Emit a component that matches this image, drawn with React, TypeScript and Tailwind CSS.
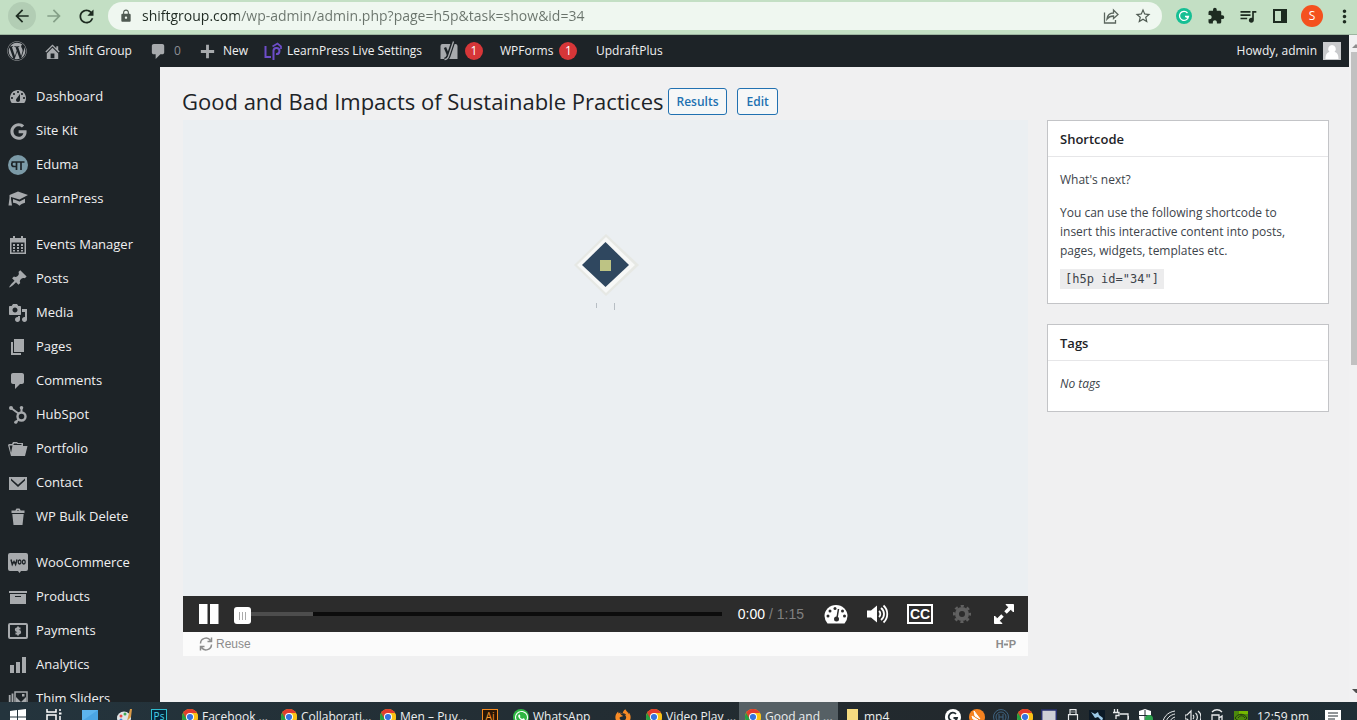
import type { ReactNode } from "react";
import { FaWordpress, FaWhatsapp, FaFirefoxBrowser } from "react-icons/fa6";
import { FaGoogle } from "react-icons/fa";
import { MdArrowBack, MdArrowForward, MdRefresh, MdLock, MdStarBorder, MdExtension, MdQueueMusic, MdMoreVert } from "react-icons/md";

const dash = {
  home: "M16 8.5l1.53 1.53-1.06 1.06L10 4.6l-6.47 6.49-1.06-1.06L10 2.5l4 4v-2h2v4zm-6-2.46l6 5.99V18H4v-5.97zM12 17v-5H8v5h4z",
  comment: "M5 2h9c1.1 0 2 .9 2 2v7c0 1.1-.9 2-2 2h-2l-5 5v-5H5c-1.1 0-2-.9-2-2V4c0-1.1.9-2 2-2z",
  plus: "M17 8.5v3h-5.5V17h-3v-5.500H3v-3h5.500V3h3v5.500z",
  dashboard: "M3.760 16h12.480c1.100-1.370 1.760-3.110 1.760-5 0-4.420-3.580-8-8-8s-8 3.580-8 8c0 1.890.660 3.630 1.760 5zM10 4c.550 0 1 .450 1 1s-.450 1-1 1-1-.450-1-1 .450-1 1-1zM6 6c.550 0 1 .450 1 1s-.450 1-1 1-1-.450-1-1 .450-1 1-1zm8 0c.550 0 1 .450 1 1s-.450 1-1 1-1-.450-1-1 .450-1 1-1zm-5.370 5.550L12 7v6c0 1.100-.900 2-2 2s-2-.900-2-2c0-.570.240-1.080.630-1.450zM4 10c.550 0 1 .450 1 1s-.450 1-1 1-1-.450-1-1 .450-1 1-1zm12 0c.550 0 1 .450 1 1s-.450 1-1 1-1-.450-1-1 .450-1 1-1z",
  calendar: "M5 1h2v2h6V1h2v2h3v16H2V3h3zM3.500 7.500v10h13v-10zM5 9h2v2H5zm4 0h2v2H9zm4 0h2v2h-2zM5 12h2v2H5zm4 0h2v2H9zm4 0h2v2h-2zM5 15h2v1.500H5zm4 0h2v1.500H9zm4 0h2v1.500h-2z",
  pin: "M10.440 3.020l1.820-1.820 6.360 6.350-1.830 1.820c-1.050-.680-2.480-.570-3.410.360l-.750.750c-.920.930-1.040 2.350-.350 3.410l-1.830 1.820-2.410-2.410-2.800 2.790c-.420.420-3.380 2.710-3.800 2.290s1.860-3.390 2.280-3.810l2.790-2.790L4.100 9.360l1.830-1.820c1.050.690 2.480.570 3.400-.360l.750-.750c.930-.920 1.050-2.350.360-3.410z",
  media: "M13 11V4c0-.550-.450-1-1-1h-1.670L9 1H5L3.670 3H2c-.550 0-1 .450-1 1v7c0 .550.450 1 1 1h10c.550 0 1-.450 1-1zM7 4.500c1.380 0 2.500 1.120 2.500 2.500S8.380 9.500 7 9.500 4.500 8.380 4.500 7 5.620 4.500 7 4.500zM14 6h5v10.500c0 1.380-1.120 2.500-2.500 2.500S14 17.880 14 16.500s1.120-2.500 2.500-2.500c.170 0 .340.020.500.050V9h-3V6zm-4 8.050V13h2v3.500c0 1.380-1.120 2.500-2.500 2.500S7 17.880 7 16.500 8.120 14 9.500 14c.170 0 .340.020.500.050z",
  page: "M6 15V2h10v13H6zm-1 1h8v2H3V5h2v11z",
  folder: "M0 6l1-1h3l1-2h4l1 1h5v3h4.500L17 17H3zM1.500 6.500L3 14l1.500-7.500zM5.500 5v1h8V5zM6 4v.500h3V4z",
  mail: "M1 4h18v13H1zM3 5.500v2l7 6.500 7-6.500v-2l-7 6.200z",
  trash: "M7.500 3.500V3l1-1.500h3L12.500 3v.500h4V6h-13V3.500zm1.500 0h2V3H9zM4.300 7h11.400l-1.200 11H5.500z",
  archive: "M19 4v2H1V4h18zM2 7h16v10H2V7zm11 3V9H7v1h6z",
  chart: "M18 18V2h-4v16h4zm-6 0V7H8v11h4zm-6 0v-8H2v8h4z",
  cap: "M10 2.500L20 6l-8.500 4.500L3 8v2l1 6.500H0.500L1.500 9V6zM5 10l6.500 2.500L17 9.800v4c-2 .5-3.500 1-5.500 3-2-2-4-2.800-6.500-3z",
};

function Dashicon({ d, size = 20 }: { d: string; size?: number }) {
  return (
    <svg viewBox="0 0 20 20" width={size} height={size} fill="currentColor" fillRule="evenodd" aria-hidden="true">
      <path d={d} />
    </svg>
  );
}

function EdumaIcon() {
  return (
    <svg viewBox="0 0 20 20" width="20" height="20" aria-hidden="true">
      <circle cx="10" cy="10" r="10" fill="#7b9aa7" />
      <path d="M3.500 7h13M8.500 7v8M13 7v8M8.500 11.500H6a2.200 2.200 0 0 1 0-4.500" fill="none" stroke="#1d2327" strokeWidth="1.700" />
    </svg>
  );
}

function HubSpotIcon() {
  return (
    <svg viewBox="0 0 20 20" width="20" height="20" fill="none" stroke="currentColor" aria-hidden="true">
      <circle cx="13.500" cy="11.500" r="4" strokeWidth="2.400" />
      <path d="M3 3l7.500 5.500M13.500 3v4.500M10.500 14.500L8 17" strokeWidth="2" />
      <g fill="currentColor" stroke="none">
        <circle cx="3" cy="3" r="2" />
        <circle cx="13.500" cy="2.800" r="1.800" />
        <circle cx="7.800" cy="17.200" r="1.600" />
      </g>
    </svg>
  );
}

function WooIcon() {
  return (
    <svg viewBox="0 0 20 20" width="20" height="20" aria-hidden="true">
      <path d="M2 0h16a2 2 0 0 1 2 2v14a2 2 0 0 1-2 2h-5l-1.500 2-1.500-2H2a2 2 0 0 1-2-2V2a2 2 0 0 1 2-2z" fill="#a7aaad" />
      <path d="M3 6.500l1.300 5L6 8.500l1.600 3 1.400-5" fill="none" stroke="#1d2327" strokeWidth="1.500" />
      <ellipse cx="11.600" cy="9" rx="1.400" ry="2" fill="none" stroke="#1d2327" strokeWidth="1.300" />
      <ellipse cx="15.800" cy="9" rx="1.400" ry="2" fill="none" stroke="#1d2327" strokeWidth="1.300" />
    </svg>
  );
}

function PaymentsIcon() {
  return (
    <svg viewBox="0 0 20 20" width="20" height="20" fill="none" stroke="currentColor" aria-hidden="true">
      <rect x="1" y="3" width="18" height="14" rx="1" strokeWidth="2" />
      <path d="M12.500 7.500H9a1.250 1.250 0 0 0 0 2.500h2a1.250 1.250 0 0 1 0 2.500H7.500M10 5.500v9" strokeWidth="1.800" />
    </svg>
  );
}

function SlidersIcon() {
  return (
    <svg viewBox="0 0 20 20" width="20" height="20" fill="none" stroke="currentColor" aria-hidden="true">
      <path d="M1.700 6v10M4.500 4.500v13" strokeWidth="1.800" />
      <rect x="7" y="3" width="12" height="14" strokeWidth="1.500" />
      <path d="M8 16V8l5 5 5-5v8zM14 5h2.500v2.500H14z" fill="currentColor" stroke="none" />
    </svg>
  );
}

function YoastIcon() {
  return (
    <svg viewBox="0 0 20 20" width="20" height="20" aria-hidden="true">
      <path d="M3.500 3h13a2 2 0 0 1 2 2v13H1.500V5a2 2 0 0 1 2-2z" fill="#a7aaad" />
      <path d="M14.500 0l-5 15c-.8 2.200-2 3.500-4 3.800" fill="none" stroke="#1d2327" strokeWidth="4" />
      <path d="M6 6.500l3.300 8" fill="none" stroke="#1d2327" strokeWidth="2.400" />
      <path d="M14.500 .5l-5 15c-.8 2-2 3-4 3.200" fill="none" stroke="#a7aaad" strokeWidth="1.300" />
    </svg>
  );
}

function LearnPressLogo() {
  return (
    <svg viewBox="0 0 18 18" width="18" height="18" fill="none" stroke="#6d4dc8" strokeWidth="2" aria-hidden="true">
      <path d="M1.500 4v11H7M9.500 18V8.500a3 3 0 1 1 2.500 3.500" />
      <path d="M8.500 4.500l5-3 3.500 3v2.500" strokeWidth="1.700" />
    </svg>
  );
}

function ChromeLogo() {
  return (
    <svg viewBox="0 0 16 16" width="16" height="16" aria-hidden="true">
      <circle cx="8" cy="8" r="8" fill="#fbc116" />
      <path d="M8 8L1.070 4A8 8 0 0 1 14.930 4z" fill="#e33b2e" />
      <path d="M1.070 4A8 8 0 0 0 8 16l3.200-6.500L8 8z" fill="#269f42" />
      <path d="M1.070 4L5 10.500 8 8z" fill="#e33b2e" />
      <path d="M8 4h6.930A8 8 0 0 1 8 16l3.400-6z" fill="#fbc116" />
      <circle cx="8" cy="8" r="4" fill="#fff" />
      <circle cx="8" cy="8" r="3.100" fill="#3473e0" />
    </svg>
  );
}

type MenuEntry = { label: string; icon: ReactNode };

const menuGroups: MenuEntry[][] = [
  [
    { label: "Dashboard", icon: <Dashicon d={dash.dashboard} /> },
    { label: "Site Kit", icon: <FaGoogle size={17} /> },
    { label: "Eduma", icon: <EdumaIcon /> },
    { label: "LearnPress", icon: <Dashicon d={dash.cap} /> },
  ],
  [
    { label: "Events Manager", icon: <Dashicon d={dash.calendar} /> },
    { label: "Posts", icon: <Dashicon d={dash.pin} /> },
    { label: "Media", icon: <Dashicon d={dash.media} /> },
    { label: "Pages", icon: <Dashicon d={dash.page} /> },
    { label: "Comments", icon: <Dashicon d={dash.comment} /> },
    { label: "HubSpot", icon: <HubSpotIcon /> },
    { label: "Portfolio", icon: <Dashicon d={dash.folder} /> },
    { label: "Contact", icon: <Dashicon d={dash.mail} /> },
    { label: "WP Bulk Delete", icon: <Dashicon d={dash.trash} /> },
  ],
  [
    { label: "WooCommerce", icon: <WooIcon /> },
    { label: "Products", icon: <Dashicon d={dash.archive} /> },
    { label: "Payments", icon: <PaymentsIcon /> },
    { label: "Analytics", icon: <Dashicon d={dash.chart} /> },
    { label: "Thim Sliders", icon: <SlidersIcon /> },
  ],
];

function BrowserBar() {
  return (
    <header className="flex h-[35px] shrink-0 items-start border-b border-[#9db5a0] bg-[#c3dfc4] pl-2 pr-[2px] pt-[2px] text-[#1d2b20]">
      <button aria-label="Back" className="flex size-7 items-center justify-center rounded-full bg-[#b2cdb4]"><MdArrowBack size={20} /></button>
      <button aria-label="Forward" className="ml-1 flex size-7 items-center justify-center text-[#85a088]"><MdArrowForward size={20} /></button>
      <button aria-label="Reload" className="ml-1 mr-2 flex size-7 items-center justify-center"><MdRefresh size={21} /></button>
      <div className="flex h-7 min-w-0 flex-1 items-center rounded-full bg-[#eff7f0] pl-[11px] pr-[10px]">
        <MdLock size={14} className="text-[#4f5a52]" />
        <input
          aria-label="Address"
          readOnly
          value="shiftgroup.com/wp-admin/admin.php?page=h5p&task=show&id=34"
          className="ml-[9px] min-w-0 flex-1 bg-[linear-gradient(to_right,#1f2a22_97px,#69736b_97px)] bg-clip-text text-sm text-transparent outline-none"
        />
        <button aria-label="Share" className="mr-[14px] text-[#5b665e]">
          <svg viewBox="0 0 18 18" width="18" height="18" fill="none" stroke="currentColor" strokeWidth="1.300">
            <path d="M2.500 5.500v10.500h11v-3M5 12c.5-4 3-6 6.500-6V3l4.500 4.500-4.500 4V9C8.500 9 6.500 10 5 12z" />
          </svg>
        </button>
        <button aria-label="Bookmark" className="text-[#4f5a52]"><MdStarBorder size={18} /></button>
      </div>
      <div className="flex h-7 items-center pl-[14px]">
        <button aria-label="Grammarly" className="flex size-4 items-center justify-center rounded-full bg-[#15bf94] text-white">
          <svg viewBox="0 0 12 12" width="12" height="12" fill="none" stroke="currentColor" strokeWidth="1.300"><path d="M9.500 3A4.500 4.500 0 1 0 10.500 6.500H7M9 8V6.500" /></svg>
        </button>
        <button aria-label="Extensions" className="ml-[15px]"><MdExtension size={18} /></button>
        <button aria-label="Media controls" className="ml-[13px]"><MdQueueMusic size={20} /></button>
        <button aria-label="Side panel" className="ml-[15px]">
          <svg viewBox="0 0 14 14" width="14" height="14"><path d="M0 0h14v14H0zM2 2v10h6V2z" fill="currentColor" fillRule="evenodd" /></svg>
        </button>
        <button aria-label="Profile" className="ml-[14px] flex size-[22px] items-center justify-center rounded-full bg-[#f4511e] text-xs text-white">S</button>
        <button aria-label="Menu" className="ml-[11px]"><MdMoreVert size={21} /></button>
      </div>
    </header>
  );
}

function AdminBar() {
  return (
    <nav aria-label="Toolbar" className="flex h-8 shrink-0 items-center bg-[#1d2327] px-2 text-[12px] text-[#f0f0f1]">
      <a href="#wp" aria-label="About WordPress" className="-ml-px w-[36px] text-[#a7aaad]"><FaWordpress size={20} /></a>
      <a href="#site" className="flex w-[106px] items-center gap-[6px]"><span className="text-[#a7aaad]"><Dashicon d={dash.home} size={19} /></span>Shift Group</a>
      <a href="#comments" className="flex w-[49px] items-center gap-[6px] text-[#a7aaad]"><Dashicon d={dash.comment} size={19} /><span className="text-[#8c8f94]">0</span></a>
      <a href="#new" className="flex w-[66px] items-center gap-[6px]"><span className="text-[#a7aaad]"><Dashicon d={dash.plus} size={19} /></span>New</a>
      <a href="#learnpress" className="flex w-[175px] items-center gap-[5px] whitespace-nowrap"><LearnPressLogo />LearnPress Live Settings</a>
      <a href="#yoast" className="flex w-[61px] items-center gap-[6px]"><YoastIcon /><Badge /></a>
      <a href="#wpforms" className="flex w-[96px] items-center gap-[6px]">WPForms<Badge /></a>
      <a href="#updraft">UpdraftPlus</a>
      <a href="#profile" className="ml-auto flex items-center gap-[6px]">
        Howdy, admin
        <svg viewBox="0 0 18 18" width="18" height="18" aria-hidden="true">
          <path d="M0 0h18v18H0z" fill="#c9cacc" />
          <path d="M9 3a4 4 0 0 1 2.500 7c3 .5 4 3 4 7h-13c0-4 1-6.500 4-7A4 4 0 0 1 9 3z" fill="#fff" />
        </svg>
      </a>
    </nav>
  );
}

function Badge() {
  return <span className="flex size-[18px] items-center justify-center rounded-full bg-[#d63638] text-xs text-white">1</span>;
}

function Sidebar() {
  return (
    <aside className="w-40 shrink-0 overflow-hidden bg-[#1d2327] pt-[13px]">
      {menuGroups.map((group, index) => (
        <ul key={index} className="mb-3">
          {group.map((item) => (
            <li key={item.label}>
              <a href="#menu" className="flex h-[34px] items-center gap-2 whitespace-nowrap pl-2 text-[13px] text-[#f0f0f1]">
                <span className="flex w-5 shrink-0 justify-center text-[#a7aaad]">{item.icon}</span>
                {item.label}
              </a>
            </li>
          ))}
        </ul>
      ))}
    </aside>
  );
}

function LoadingMark() {
  return (
    <svg viewBox="0 0 70 84" width="70" height="84" aria-label="Loading">
      <path d="M35 4L68 35 35 66 3 35z" fill="#e6e8e4" />
      <path d="M35 7L64 35 35 63 6 35z" fill="#f7f8f7" />
      <path d="M34.500 12L58 35 34.500 57 11 35z" fill="#2f475f" />
      <path d="M29 30h11v11H29z" fill="#bdc384" />
      <path d="M25.500 73v5M43.500 73v7" stroke="#b7bec4" />
    </svg>
  );
}

function Player() {
  return (
    <section aria-label="Video" className="ml-px min-w-0 flex-1">
      <div className="flex h-[476px] items-start justify-center bg-[#ebeff2] pt-[110px]"><LoadingMark /></div>
      <div className="flex h-9 items-center bg-[#2c2c2c] pl-4 pr-[14px] text-white" style={{ fontFamily: '"Liberation Sans", Arial, sans-serif' }}>
        <button aria-label="Pause" className="mr-4">
          <svg viewBox="0 0 20 20" width="20" height="20" fill="currentColor"><path d="M0 0h8.500v20H0zM11 0h8.500v20H11z" /></svg>
        </button>
        <div className="relative flex h-5 min-w-0 flex-1 items-center">
          <div className="h-1 w-full bg-[#0c0c0c]"><div className="h-full w-[16%] bg-[#4d4d4d]" /></div>
          <input type="range" aria-label="Seek" min={0} max={75} defaultValue={0} className="absolute inset-0 w-full opacity-0" />
          <span className="pointer-events-none absolute -left-px top-[3px] flex size-[17px] items-center justify-center gap-[2px] rounded-[3px] bg-white">
            <i className="h-2 w-px bg-[#aaa]" /><i className="h-2 w-px bg-[#aaa]" /><i className="h-2 w-px bg-[#aaa]" />
          </span>
        </div>
        <span className="ml-4 whitespace-nowrap text-sm">0:00 <span className="text-[#808080]">/ 1:15</span></span>
        <button aria-label="Playback rate" className="ml-5">
          <svg viewBox="0 0 24 20" width="24" height="20"><path d="M3.500 19.500A12 12 0 0 1 0.500 12a11.500 11 0 0 1 23 0 12 12 0 0 1-3 7.500z" fill="#fff" /><path d="M14.500 5l-1.500 9" stroke="#2c2c2c" strokeWidth="1.500" /><g fill="#2c2c2c"><circle cx="12.500" cy="15" r="2.500" /><circle cx="11" cy="4.500" r="1.500" /><circle cx="6" cy="7" r="1.500" /><circle cx="4" cy="12" r="1.500" /><circle cx="18.500" cy="7" r="1.500" /><circle cx="20.500" cy="12" r="1.500" /></g></svg>
        </button>
        <button aria-label="Mute" className="ml-[19px]">
          <svg viewBox="0 0 22 20" width="22" height="20" fill="none" stroke="#fff" strokeWidth="1.800"><path d="M0 6.500h4l6-5v17l-6-5H0z" fill="#fff" stroke="none" /><path d="M12 7c1.800 1.500 1.800 4.500 0 6M14 4c4 3 4 9 0 12M16.500 1.500c5 4.500 5 12.500 0 17" /></svg>
        </button>
        <button aria-label="Captions" className="ml-[18px] flex h-5 w-[26px] items-center justify-center border-2 border-white text-sm font-bold leading-4">CC</button>
        <button aria-label="Quality" className="ml-5 text-[#606060]">
          <svg viewBox="0 0 18 18" width="18" height="18" fill="none" stroke="currentColor"><circle cx="9" cy="9" r="5" strokeWidth="4" /><circle cx="9" cy="9" r="8" strokeWidth="2.400" strokeDasharray="3.140 3.143" strokeDashoffset="1.570" /></svg>
        </button>
        <button aria-label="Fullscreen" className="ml-[23px]">
          <svg viewBox="0 0 20 20" width="20" height="20" fill="#fff" stroke="#fff"><path d="M12 .5h7.500V8zM.5 12v7.500H8z" /><path d="M17 3l-5.500 5.500M8.500 11.500L3 17" strokeWidth="3.500" /></svg>
        </button>
      </div>
      <div className="flex h-6 items-center justify-between bg-[#fbfbfb] pl-4 pr-3 text-xs text-[#8c8c8c]" style={{ fontFamily: '"Liberation Sans", Arial, sans-serif' }}>
        <button className="flex items-center gap-[3px]">
          <svg viewBox="0 0 14 14" width="14" height="14" fill="none" stroke="currentColor" strokeWidth="1.500" aria-hidden="true"><path d="M1.500 6.500A5.500 5.500 0 0 1 11.500 3.500M12.500.5v4h-4M12.500 7.500A5.500 5.500 0 0 1 2.500 10.500M1.500 13.500v-4h4" /></svg>
          Reuse
        </button>
        <a href="#h5p" aria-label="H5P" className="flex items-center text-[11px] font-bold">
          H
          <svg viewBox="0 0 5 8" width="5" height="8" fill="none" stroke="currentColor"><path d="M0 4.500h4" strokeWidth="2" /><path d="M2 1h3" /></svg>
          P
        </a>
      </div>
    </section>
  );
}

function Panel({ title, children }: { title: string; children: ReactNode }) {
  return (
    <section className="border border-[#c3c4c7] bg-white text-[12px] text-[#3c434a]">
      <h2 className="border-b border-[#e6e6e8] px-3 pb-[7px] pt-[9px] text-[13px] font-semibold leading-[19px] text-[#1d2327]">{title}</h2>
      <div className="pl-3 pr-8">{children}</div>
    </section>
  );
}

function Task({ icon, label, active = false }: { icon: ReactNode; label: string; active?: boolean }) {
  return (
    <button className={`flex h-full w-[99px] shrink-0 items-center gap-1 whitespace-nowrap pl-[6px] ${active ? "bg-[#566065]" : ""}`}>
      {icon}
      {label}
    </button>
  );
}

const folderIcon = (
  <svg viewBox="0 0 16 16" width="16" height="16" aria-hidden="true"><path d="M3 0h11v16H3z" fill="#f5db80" /><path d="M12 11h3v5h-3z" fill="#d8ae45" /></svg>
);

const launchers: { name: string; icon: ReactNode; wide?: boolean }[] = [
  { name: "Start", wide: true, icon: <svg viewBox="0 0 16 16" width="16" height="16" fill="#fff"><path d="M0 2l7-1v6.500H0zM8 1l8-1v7.500H8zM0 8.500h7V15l-7-1zM8 8.500h8V16l-8-1z" /></svg> },
  { name: "Task view", wide: true, icon: <svg viewBox="0 0 16 16" width="16" height="16" fill="none" stroke="#fff" strokeWidth="1.500"><path d="M1 0v3h9V0M1 6h9v8H1zM14 0v2M14 7v9" /><path d="M13 3.500h2.500v2H13z" fill="#fff" stroke="none" /></svg> },
  { name: "Desktop", wide: true, icon: <svg viewBox="0 0 16 16" width="16" height="16"><path d="M0 1h16v11H0z" fill="#5db4ee" /><path d="M0 12L16 1v11z" fill="#4ba5e4" /><path d="M5 13h6v1H5z" fill="#ccc" /></svg> },
  { name: "Paint", icon: <svg viewBox="0 0 16 16" width="16" height="16"><ellipse cx="7" cy="9" rx="7" ry="6.500" fill="#dfe5e6" /><circle cx="4" cy="7" r="1.500" fill="#e64848" /><circle cx="8" cy="5" r="1.500" fill="#43a853" /><circle cx="4" cy="11" r="1.500" fill="#3f81db" /><path d="M10 12l3-12h2l-1 8z" fill="#d99a47" /></svg> },
  { name: "Photoshop", icon: <span className="flex size-4 items-center justify-center border border-[#2fbdd0] bg-[#06263b] text-[10px] text-[#48d0e8]">Ps</span> },
];

const trayIcons: { name: string; icon: ReactNode }[] = [
  { name: "Grammarly", icon: <svg viewBox="0 0 16 16" width="16" height="16"><circle cx="8" cy="8" r="8" fill="#fff" /><path d="M11 5a4.200 4.200 0 1 0 1 4H8.500" fill="none" stroke="#222d33" strokeWidth="1.800" /></svg> },
  { name: "Avast", icon: <svg viewBox="0 0 16 16" width="16" height="16"><circle cx="8" cy="8" r="8" fill="#f58220" /><path d="M5 2l6 8-5-3zM3 7l6 4-5-1z" fill="#fff" stroke="#fff" /></svg> },
  { name: "HP", icon: <svg viewBox="0 0 16 16" width="16" height="16" fill="none" stroke="#3e6380"><circle cx="8" cy="8" r="7.500" /><circle cx="8" cy="8" r="5" /><path d="M6 5v6M10 5v6M6 8h4" /></svg> },
  { name: "Chrome", icon: <ChromeLogo /> },
  { name: "Display", icon: <svg viewBox="0 0 16 16" width="16" height="16"><path d="M.7 1h14.600v11H.7z" fill="#cfcfd6" stroke="#29306f" strokeWidth="1.500" /></svg> },
  { name: "USB", icon: <svg viewBox="0 0 16 16" width="16" height="16" fill="none" stroke="#e8eaeb" strokeWidth="1.200"><path d="M5 .7h6v5H5zM3.500 5.700h9V16h-9zM7 2.500v1M9 2.500v1" /></svg> },
  { name: "Graphics", icon: <svg viewBox="0 0 16 16" width="16" height="16"><path d="M0 1h16v14H0z" fill="#0b1926" /><path d="M2 3l4 2 3-2 1 3 4 3-1 3-4-4-3 1z" fill="#9cc9e7" /></svg> },
  { name: "Power", icon: <svg viewBox="0 0 16 16" width="16" height="16" fill="none" stroke="#e8eaeb" strokeWidth="1.300"><path d="M1.500 0v3M4.500 0v3M0 3.500h6v3H3V10M7 5h8v7H6M16 7v3" /></svg> },
  { name: "Security", icon: <svg viewBox="0 0 16 16" width="16" height="16"><path d="M8 0l6 2v6c0 4-3 6-6 8-3-2-6-4-6-8V2z" fill="#fff" /><path d="M8 1v14M2 6.500h12" stroke="#222d33" /><circle cx="12" cy="10" r="4" fill="#2ea44f" /></svg> },
  { name: "Wi-Fi", icon: <svg viewBox="0 0 16 16" width="16" height="16" fill="none" stroke="#e8eaeb"><path d="M2 12C4 6 8 3 14 2M5 13c1-4 4-7 9-8M8 14c1-3 3-5 6-6M11 15c0-2 1-4 3-4" /></svg> },
  { name: "Volume", icon: <svg viewBox="0 0 16 16" width="16" height="16" fill="none" stroke="#e8eaeb" strokeWidth="1.200"><path d="M0 6h2l4-4v12l-4-4H0zM8 6c1 1 1 3 0 4M10.500 4c2.500 2 2.500 6 0 8M13 2c4 3 4 9 0 12" /></svg> },
  { name: "Meet now", icon: <svg viewBox="0 0 16 16" width="16" height="16" fill="none" stroke="#e8eaeb" strokeWidth="1.300"><path d="M3 3c3-3 7-3 10 0M3 6h7v8H3zM10 9l3-2v6l-3-2" /></svg> },
  { name: "NVIDIA", icon: <svg viewBox="0 0 16 16" width="16" height="16"><path d="M1 2h14v13H1z" fill="#4c8a0c" /><path d="M6 2h9v3H6z" fill="#76b900" /><path d="M2 9c3-5 9-5 12 0-3 4-9 4-12 0zM5 9c2-3 5-3 7 0" fill="none" stroke="#24380f" /></svg> },
];

function Taskbar() {
  return (
    <footer className="h-[18px] shrink-0 overflow-hidden bg-[linear-gradient(to_right,#24343d,#22282c_75%,#1f2e36)] text-xs text-[#eceeef]">
      <div className="flex h-[30px]">
        {launchers.map((item) => (
          <button key={item.name} aria-label={item.name} className={`flex shrink-0 items-center justify-center ${item.wide ? "w-9" : "w-[34px]"}`}>{item.icon}</button>
        ))}
        <Task icon={<ChromeLogo />} label="Facebook ..." />
        <Task icon={<ChromeLogo />} label="Collaborati..." />
        <Task icon={<ChromeLogo />} label="Men – Puy..." />
        <button aria-label="Illustrator" className="flex w-[34px] shrink-0 items-center justify-center"><span className="flex size-4 items-center justify-center border border-[#f58a1f] bg-[#2a1605] text-[10px] text-[#f5982f]">Ai</span></button>
        <Task icon={<span className="flex size-4 items-center justify-center rounded-full bg-[#2fb743] text-white"><FaWhatsapp size={15} /></span>} label="WhatsApp" />
        <button aria-label="Firefox" className="flex w-[34px] shrink-0 items-center justify-center text-[#f98b25]"><FaFirefoxBrowser size={16} /></button>
        <Task icon={<ChromeLogo />} label="Video Play ..." />
        <Task icon={<ChromeLogo />} label="Good and ..." active />
        <Task icon={folderIcon} label="mp4" />
        <div className="ml-auto flex items-center pr-1">
          {trayIcons.map((item) => (
            <button key={item.name} aria-label={item.name} className="flex w-6 justify-center">{item.icon}</button>
          ))}
          <time className="w-[60px] whitespace-nowrap text-center">12:59 pm</time>
          <button aria-label="Notifications" className="flex w-10 justify-center">
            <svg viewBox="0 0 16 16" width="16" height="16"><path d="M0 1h16v12h-4l-3 3v-3H0z" fill="#fff" /><path d="M3 4h10M3 7h10M3 10h7" stroke="#222d33" /></svg>
          </button>
        </div>
      </div>
    </footer>
  );
}

export default function App() {
  return (
    <div className="flex h-screen flex-col overflow-hidden bg-[#f0f0f1]" style={{ fontFamily: '"Open Sans", "Noto Sans", sans-serif' }}>
      <BrowserBar />
      <div className="flex min-h-0 flex-1">
        <div className="flex min-w-0 flex-1 flex-col">
          <AdminBar />
          <div className="flex min-h-0 flex-1">
            <Sidebar />
            <main className="min-w-0 flex-1 overflow-hidden pl-[22px] pr-5 pt-[18px]">
              <div className="mb-[2px] flex h-[33px] items-center gap-1">
                <h1 className="whitespace-nowrap text-[22px] text-[#1d2327]">Good and Bad Impacts of Sustainable Practices</h1>
                <div className="flex gap-[10px]">
                  <a href="#results" className="rounded-[3px] border border-[#2271b1] bg-[#f6f7f7] px-2 text-xs font-semibold leading-[25px] text-[#2271b1]">Results</a>
                  <a href="#edit" className="rounded-[3px] border border-[#2271b1] bg-[#f6f7f7] px-2 text-xs font-semibold leading-[25px] text-[#2271b1]">Edit</a>
                </div>
              </div>
              <div className="flex items-start gap-[19px]">
                <Player />
                <div className="flex w-[282px] shrink-0 flex-col gap-5">
                  <Panel title="Shortcode">
                    <p className="pt-[13px] leading-[19px]">What&apos;s next?</p>
                    <p className="pt-[14px] leading-[19px]">You can use the following shortcode to insert this interactive content into posts, pages, widgets, templates etc.</p>
                    <code className="mb-[14px] mt-[9px] block w-fit bg-[#ececed] px-[5px] text-[12px] leading-5" style={{ fontFamily: '"DejaVu Sans Mono", monospace' }}>[h5p id=&quot;34&quot;]</code>
                  </Panel>
                  <Panel title="Tags">
                    <p className="pb-[18px] pt-[13px] italic leading-[19px]">No tags</p>
                  </Panel>
                </div>
              </div>
            </main>
          </div>
        </div>
        <div aria-hidden="true" className="flex w-2 shrink-0 flex-col items-end overflow-hidden bg-[#f1f1f2]">
          <svg viewBox="0 0 5 5" width="5" height="5" className="mb-1 mt-2"><path d="M0 5l4-4 1 1v3z" fill="#8d8d8d" /></svg>
          <div className="h-[313px] w-[6px] bg-[#c1c1c1]" />
          <svg viewBox="0 0 5 5" width="5" height="5" className="mb-2 mt-auto"><path d="M0 0h5v4L4 4z" fill="#505050" /></svg>
        </div>
      </div>
      <Taskbar />
    </div>
  );
}
